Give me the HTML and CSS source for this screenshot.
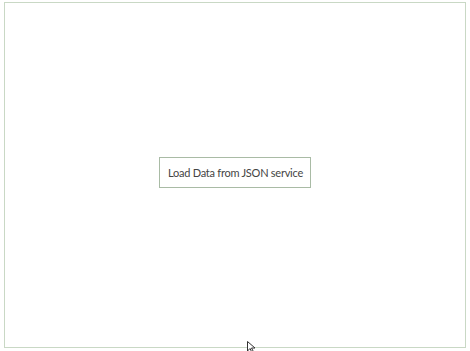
FILE: index.html
```html
<!DOCTYPE html>
<html lang="en">
<head>
    <meta charset="UTF-8">
    <title>Load Data</title>
    <link rel="stylesheet" href="styles.css">
</head>
<body>
    <div class="frame">
        <button class="load-btn" type="button">Load Data from JSON service</button>
    </div>
    <svg class="cursor" width="12" height="12" viewBox="0 0 12 12">
        <path d="M0.5 0.5 L0.5 10 L3 7.5 L5 11.5 L6.5 10.8 L4.5 7 L8 7 Z" fill="#fff" stroke="#333" stroke-width="1"/>
    </svg>
</body>
</html>
```

FILE: styles.css
```css
body {
    margin: 0;
    background: #fff;
    font-family: Lato, "Open Sans", sans-serif;
    position: relative;
    height: 351px;
    overflow: hidden;
}

.frame {
    box-sizing: border-box;
    width: 462px;
    height: 346px;
    margin: 2px 0 0 4px;
    border: 1px solid #c9d8c5;
    display: flex;
    align-items: center;
    justify-content: center;
    padding-bottom: 5px;
}

.load-btn {
    box-sizing: border-box;
    width: 152px;
    height: 31px;
    background: #fff;
    border: 1px solid #a9bba5;
    font-family: Lato, "Open Sans", sans-serif;
    font-size: 11px;
    letter-spacing: -0.25px;
    white-space: nowrap;
    color: #444;
    padding: 0 0 0 1px;
}

/* mouse pointer in the screenshot */
.cursor {
    position: absolute;
    left: 247px;
    top: 341px;
}
```
